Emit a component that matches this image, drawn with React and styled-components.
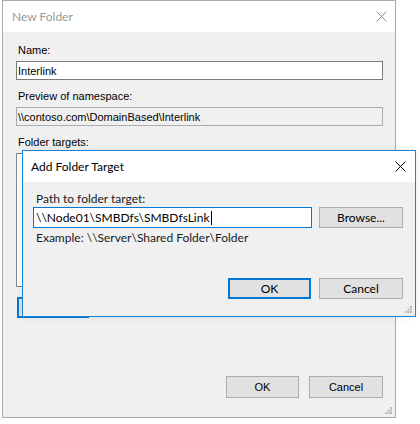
import React from "react";
import styled, { createGlobalStyle } from "styled-components";

const Global = createGlobalStyle`
  html, body { margin: 0; padding: 0; background: #ffffff; }
  body { width: 420px; height: 424px; overflow: hidden; position: relative; }
`;

const Window = styled.div`
  box-sizing: border-box;
  width: 394px;
  height: 418px;
  margin-left: 2px;
  border: 1px solid #ababab;
  background: #f0f0f0;
  display: flex;
  flex-direction: column;
  position: relative;
  font-family: "Liberation Sans", Arial, sans-serif;
  font-size: 11px;
  color: #000;
`;

const TitleBar = styled.div`
  height: 31px;
  flex: none;
  background: #ffffff;
  display: flex;
  align-items: center;
  justify-content: space-between;
  padding: 0 ${(p) => p.$padRight}px 0 ${(p) => p.$padLeft}px;
  font-family: Lato, "Open Sans", sans-serif;
  font-size: 12px;
  color: ${(p) => (p.$active ? "#000000" : "#999999")};
`;

const CloseX = ({ color }) => (
  <svg width="11" height="11" viewBox="0 0 11 11">
    <path d="M0.5 0.5 L10.5 10.5 M10.5 0.5 L0.5 10.5" stroke={color} strokeWidth="1" />
  </svg>
);

const Body = styled.div`
  flex: 1;
  display: flex;
  flex-direction: column;
  padding: 12px 12px 0 13px;
`;

const Label = styled.div`
  height: 13px;
  line-height: 13px;
  margin: ${(p) => p.$m || "0"};
  padding-left: 2px;
  white-space: nowrap;
`;

const TextBox = styled.div`
  box-sizing: border-box;
  height: 19px;
  border: 1px solid ${(p) => (p.$readOnly ? "#acacac" : "#7a7a7a")};
  background: ${(p) => (p.$readOnly ? "#f0f0f0" : "#ffffff")};
  display: flex;
  align-items: center;
  padding-left: 1px;
  margin: ${(p) => p.$m || "0"};
  white-space: nowrap;
`;

const ListBox = styled.div`
  box-sizing: border-box;
  height: 134px;
  width: 366px;
  border: 1px solid #828790;
  background: #ffffff;
  margin-top: 4px;
`;

const FocusedSmallButton = styled.div`
  box-sizing: border-box;
  width: 72px;
  height: 21px;
  margin: 10px 0 0 1px;
  border: 2px solid #0078d7;
  background: #e1e1e1;
`;

const Footer = styled.div`
  margin-top: auto;
  display: flex;
  justify-content: flex-end;
  gap: 10px;
  padding: 0 0 19px 0;
`;

const Button = styled.div`
  box-sizing: border-box;
  width: ${(p) => p.$w || 72}px;
  height: ${(p) => p.$h || 21}px;
  border: ${(p) => (p.$focused ? "2px solid #0078d7" : "1px solid #adadad")};
  background: #e1e1e1;
  display: flex;
  align-items: center;
  justify-content: center;
  color: #000;
`;

const Grip = () => (
  <svg width="7" height="7" viewBox="0 0 7 7">
    {[
      [5, 0],
      [5, 2.5],
      [2.5, 2.5],
      [5, 5],
      [2.5, 5],
      [0, 5],
    ].map(([x, y], i) => (
      <rect key={i} x={x} y={y} width="2" height="2" fill="#bcbcbc" />
    ))}
  </svg>
);

const GripSpot = styled.div`
  position: absolute;
  right: ${(p) => p.$r}px;
  bottom: ${(p) => p.$b}px;
  display: flex;
`;

const Dialog = styled.div`
  position: absolute;
  left: 22px;
  top: 150px;
  width: 394px;
  height: 167px;
  box-sizing: border-box;
  border: 1px solid #1883d7;
  background: #f0f0f0;
  display: flex;
  flex-direction: column;
  font-family: Lato, "Open Sans", sans-serif;
  font-size: 12px;
  color: #000;
  box-shadow: 0 0 8px rgba(0, 0, 0, 0.08);
`;

const DialogBody = styled.div`
  flex: 1;
  display: flex;
  flex-direction: column;
  padding: 10px 12px 0 10px;
`;

const DLabel = styled.div`
  height: 16px;
  line-height: 16px;
  padding-left: 3px;
  margin: ${(p) => p.$m || "0"};
  white-space: nowrap;
  color: #1a1a1a;
`;

const Row = styled.div`
  display: flex;
  align-items: center;
  gap: ${(p) => p.$gap || 8}px;
  justify-content: ${(p) => p.$justify || "flex-start"};
  margin: ${(p) => p.$m || "0"};
`;

const PathInput = styled.div`
  box-sizing: border-box;
  width: 279px;
  height: 21px;
  border: 1px solid #0078d7;
  background: #ffffff;
  display: flex;
  align-items: center;
  padding-left: 2px;
  white-space: nowrap;
`;

const Caret = styled.span`
  display: inline-block;
  width: 1px;
  height: 14px;
  background: #000;
  margin-left: 1px;
`;

export default function App() {
  return (
    <>
      <Global />
      <Window>
        <TitleBar $padLeft={9} $padRight={8}>
          <span>New Folder</span>
          <CloseX color="#8a8a8a" />
        </TitleBar>
        <Body>
          <Label>Name:</Label>
          <TextBox $m="4px 0 0 0">Interlink</TextBox>
          <Label $m="10px 0 0 0">Preview of namespace:</Label>
          <TextBox $readOnly $m="4px 0 0 0">\\contoso.com\DomainBased\Interlink</TextBox>
          <Label $m="10px 0 0 0">Folder targets:</Label>
          <ListBox />
          <FocusedSmallButton />
          <Footer>
            <Button $w={73} $h={22}>OK</Button>
            <Button $w={74} $h={22}>Cancel</Button>
          </Footer>
        </Body>
        <GripSpot $r={3} $b={3}>
          <Grip />
        </GripSpot>
      </Window>

      <Dialog>
        <TitleBar $active $padLeft={8} $padRight={9}>
          <span>Add Folder Target</span>
          <CloseX color="#000000" />
        </TitleBar>
        <DialogBody>
          <DLabel $m="-1px 0 0 0">Path to folder target:</DLabel>
          <Row $gap={7} $m="0 0 0 0">
            <PathInput>
              \\Node01\SMBDfs\SMBDfsLink
              <Caret />
            </PathInput>
            <Button $w={84} $h={21}>Browse...</Button>
          </Row>
          <DLabel $m="2px 0 0 0">Example: \\Server\Shared Folder\Folder</DLabel>
          <Row $gap={8} $justify="flex-end" $m="32px 0 0 0">
            <Button $w={83} $h={21} $focused>OK</Button>
            <Button $w={84} $h={21}>Cancel</Button>
          </Row>
        </DialogBody>
        <GripSpot $r={3} $b={3}>
          <Grip />
        </GripSpot>
      </Dialog>
    </>
  );
}
